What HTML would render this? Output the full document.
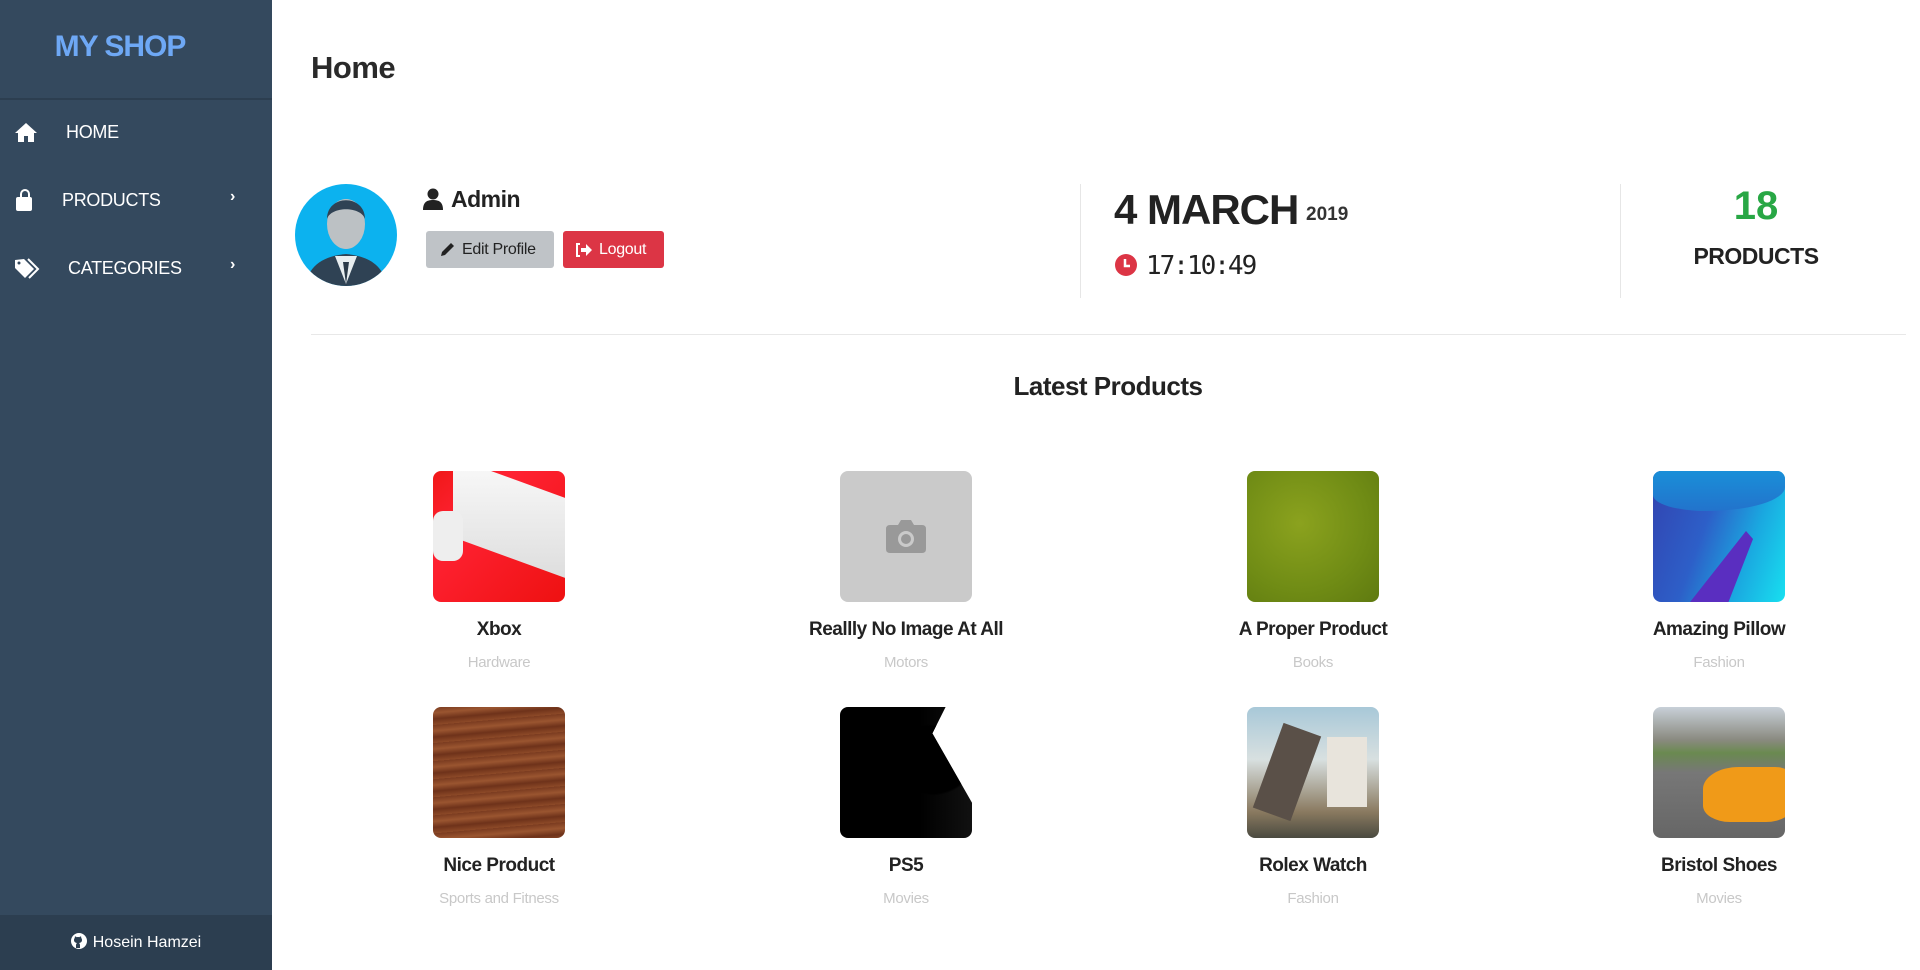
<!DOCTYPE html>
<html><head><meta charset="utf-8"><style>
*{margin:0;padding:0;box-sizing:border-box}
body{width:1920px;height:970px;overflow:hidden;font-family:"Liberation Sans",sans-serif;background:#fff;position:relative;color:#222}
.sb{position:absolute;left:0;top:0;width:272px;height:970px;background:#34495e}
.logo{position:absolute;top:30px;left:0;width:240px;text-align:center;color:#6ea8f5;font-weight:bold;font-size:30px;letter-spacing:-1px}
.sbline{position:absolute;top:98px;left:0;width:272px;height:2px;background:#2c3e50}
.nav{position:absolute;left:0;width:272px;color:#fff;font-size:18px;letter-spacing:-0.3px}
.nav svg{position:absolute;left:14px;top:-11px}
.nav .t{position:absolute;top:-10px}
.nav .ch{position:absolute;left:230px;top:-12px;font-size:16px;font-weight:bold}
.foot{position:absolute;left:0;bottom:0;width:272px;height:55px;background:#2c3e50;color:#fff;font-size:16px;text-align:center;line-height:55px}
.a{position:absolute}
.btn{position:absolute;height:37px;border-radius:3px;font-size:16px;line-height:37px;padding-left:36px;letter-spacing:-0.3px}
.img{position:absolute;width:132px;height:131px;border-radius:8px;overflow:hidden}
.nm{position:absolute;width:400px;text-align:center;font-size:19px;font-weight:bold;color:#222;letter-spacing:-0.5px}
.ct{position:absolute;width:400px;text-align:center;font-size:15px;color:#c8c8c8;letter-spacing:-0.3px}
</style></head><body>
<div class="sb">
<div class="logo">MY SHOP</div>
<div class="sbline"></div>
<div class="nav" style="top:132px"><svg width="24" height="22" viewBox="0 0 24 22"><path d="M12 2 L1 12 L4 12 L4 21 L10 21 L10 15 L14 15 L14 21 L20 21 L20 12 L23 12 Z" fill="#fff"/></svg><span class="t" style="left:66px">HOME</span></div>
<div class="nav" style="top:200px"><svg width="22" height="24" viewBox="0 0 22 24"><path d="M7 8 V5 a4 4 0 0 1 8 0 V8" stroke="#fff" stroke-width="2" fill="none"/><rect x="2" y="8" width="16" height="14" rx="2" fill="#fff"/></svg><span class="t" style="left:62px">PRODUCTS</span><span class="ch">›</span></div>
<div class="nav" style="top:268px"><svg width="28" height="24" viewBox="0 0 28 24"><path d="M1 3 L1 11 L11 21 L20 12 L10 2 Z" fill="#fff"/><path d="M14 2 L24 12 L15 21" stroke="#fff" stroke-width="2" fill="none"/><circle cx="5" cy="6" r="1.5" fill="#34495e"/></svg><span class="t" style="left:68px">CATEGORIES</span><span class="ch">›</span></div>
<div class="foot"><svg width="16" height="16" viewBox="0 0 16 16" style="vertical-align:-2px;margin-right:6px"><circle cx="8" cy="8" r="8" fill="#fff"/><path d="M5 15 v-3 c0-1 .5-1.5 1-2 c-2-.3-3-1.2-3-3 c0-1 .3-1.6 .8-2 c-.1-.6 0-1.2 .2-1.6 c.6 0 1.2 .4 1.8 .8 c.8-.2 1.6-.2 2.4 0 c.6-.4 1.2-.8 1.8-.8 c.2 .4 .3 1 .2 1.6 c.5 .4 .8 1 .8 2 c0 1.8-1 2.7-3 3 c.5 .5 1 1 1 2 v3 z" fill="#2c3e50"/></svg>Hosein Hamzei</div>
</div>

<div class="a" style="left:311px;top:50px;font-size:31px;color:#2a2a2a;font-weight:bold;letter-spacing:-0.5px">Home</div>

<svg class="a" style="left:295px;top:184px" width="102" height="102" viewBox="0 0 102 102"><defs><clipPath id="c"><circle cx="51" cy="51" r="51"/></clipPath></defs><g clip-path="url(#c)"><rect width="102" height="102" fill="#0cb2ef"/><path d="M10 102 C14 80 30 72 51 70 C72 72 88 80 92 102 Z" fill="#2f4254"/><path d="M40 72 L51 100 L62 72 Z" fill="#e8eef0"/><path d="M48 78 L51 100 L54 78 Z" fill="#2a3a48"/><ellipse cx="51" cy="40" rx="19" ry="25" fill="#bcc1c4"/><path d="M32 35 C32 10 70 10 70 35 C66 22 36 22 32 35Z" fill="#2f4254"/></g></svg>

<svg class="a" style="left:423px;top:188px" width="20" height="22" viewBox="0 0 20 22"><circle cx="10" cy="6" r="5.5" fill="#222"/><path d="M0 22 C0 14 4 12 10 12 C16 12 20 14 20 22Z" fill="#222"/></svg>
<div class="a" style="left:451px;top:186px;font-size:23px;font-weight:bold;color:#222;letter-spacing:-0.5px">Admin</div>
<div class="btn" style="left:426px;top:231px;width:128px;background:#bfc3c7;color:#222"><svg class="a" style="left:13px;top:11px" width="16" height="16" viewBox="0 0 16 16"><path d="M2 14 L3 10 L12 1 L15 4 L6 13 Z" fill="#222"/></svg>Edit Profile</div>
<div class="btn" style="left:563px;top:231px;width:101px;background:#dc3545;color:#fff"><svg class="a" style="left:12px;top:12px" width="18" height="14" viewBox="0 0 18 14"><path d="M5 1 H2 V13 H5" stroke="#fff" stroke-width="2" fill="none"/><path d="M6 5 H11 V1 L17 7 L11 13 V9 H6 Z" fill="#fff"/></svg>Logout</div>

<div class="a" style="left:1080px;top:184px;width:1px;height:114px;background:#e6e6e6"></div>
<div class="a" style="left:1114px;top:186px;font-size:42px;color:#222;font-weight:bold;letter-spacing:-1px">4&nbsp;MARCH</div>
<div class="a" style="left:1306px;top:204px;font-size:19px;color:#333;font-weight:bold">2019</div>
<svg class="a" style="left:1115px;top:254px" width="22" height="22" viewBox="0 0 22 22"><circle cx="11" cy="11" r="11" fill="#dc3545"/><path d="M10 5 V12 H15" stroke="#fff" stroke-width="2.5" fill="none"/></svg>
<div class="a" style="left:1146px;top:251px;font-size:26px;color:#222;font-family:'DejaVu Sans Mono',monospace;letter-spacing:-2px">17:10:49</div>

<div class="a" style="left:1620px;top:184px;width:1px;height:114px;background:#e6e6e6"></div>
<div class="a" style="left:1620px;top:184px;width:272px;text-align:center;font-size:40px;font-weight:bold;color:#28a745">18</div>
<div class="a" style="left:1620px;top:243px;width:272px;text-align:center;font-size:23px;font-weight:bold;color:#222;letter-spacing:-0.5px">PRODUCTS</div>

<div class="a" style="left:311px;top:334px;width:1595px;height:1px;background:#e8e8e8"></div>
<div class="a" style="left:908px;top:371px;width:400px;text-align:center;font-size:26px;font-weight:bold;color:#222;letter-spacing:-0.5px">Latest Products</div>

<div class="img" style="left:433px;top:471px;background:linear-gradient(135deg,#f01818 0%,#f23 30%,#e11 100%)"><div class="a" style="left:20px;top:8px;width:120px;height:80px;background:linear-gradient(160deg,#fafafa,#ddd);transform:skewY(20deg)"></div><div class="a" style="left:0px;top:40px;width:30px;height:50px;background:#eee;border-radius:10px"></div></div>
<div class="img" style="left:840px;top:471px;background:#cacaca"><svg class="a" style="left:46px;top:48px" width="40" height="34" viewBox="0 0 40 34"><path d="M4 6 H12 L15 1 H25 L28 6 H36 Q40 6 40 10 V30 Q40 34 36 34 H4 Q0 34 0 30 V10 Q0 6 4 6Z" fill="#999"/><circle cx="20" cy="20" r="8" fill="#cacaca"/><circle cx="20" cy="20" r="5" fill="#999"/></svg></div>
<div class="img" style="left:1247px;top:471px;background:radial-gradient(circle at 40% 40%,#8ba21e,#708c15 60%,#5f7a10)"></div>
<div class="img" style="left:1653px;top:471px;background:linear-gradient(110deg,#3243b0 0%,#2d5fc8 40%,#1aa8e0 70%,#18e0f0 100%)"><div class="a" style="left:0;top:0;width:132px;height:40px;background:linear-gradient(180deg,#1a8fd8,#2273cc);border-radius:0 0 60% 40%"></div><div class="a" style="left:30px;top:60px;width:70px;height:80px;background:#5a2ec0;clip-path:polygon(90% 0,100% 10%,60% 100%,0 100%)"></div></div>

<div class="img" style="left:433px;top:707px;background:repeating-linear-gradient(175deg,#7a3b20 0px,#9a5530 6px,#6e321a 12px,#8d4a28 18px)"></div>
<div class="img" style="left:840px;top:707px;background:#fff"><div class="a" style="left:0;top:0;width:132px;height:132px;background:radial-gradient(ellipse at 70% 40%,#000 30%,transparent 32%),linear-gradient(90deg,#000 60%,#111 100%);clip-path:polygon(0 0,80% 0,70% 20%,110% 90%,100% 100%,0 100%)"></div></div>
<div class="img" style="left:1247px;top:707px;background:linear-gradient(180deg,#a8c8d8 0%,#d8e0e0 40%,#8a7a60 80%,#4a4a40 100%)"><div class="a" style="left:20px;top:20px;width:40px;height:90px;background:#5a5048;transform:rotate(20deg)"></div><div class="a" style="left:80px;top:30px;width:40px;height:70px;background:#e8e4dc"></div></div>
<div class="img" style="left:1653px;top:707px;background:linear-gradient(180deg,#c8d0d8 0%,#8a8a80 25%,#6a8a50 35%,#777 50%,#666 100%)"><div class="a" style="left:50px;top:60px;width:90px;height:55px;background:#f09a18;border-radius:40% 20% 30% 30%"></div></div>

<div class="nm" style="left:299px;top:619px">Xbox</div><div class="ct" style="left:299px;top:654px">Hardware</div>
<div class="nm" style="left:706px;top:619px">Reallly No Image At All</div><div class="ct" style="left:706px;top:654px">Motors</div>
<div class="nm" style="left:1113px;top:619px">A Proper Product</div><div class="ct" style="left:1113px;top:654px">Books</div>
<div class="nm" style="left:1519px;top:619px">Amazing Pillow</div><div class="ct" style="left:1519px;top:654px">Fashion</div>
<div class="nm" style="left:299px;top:855px">Nice Product</div><div class="ct" style="left:299px;top:890px">Sports and Fitness</div>
<div class="nm" style="left:706px;top:855px">PS5</div><div class="ct" style="left:706px;top:890px">Movies</div>
<div class="nm" style="left:1113px;top:855px">Rolex Watch</div><div class="ct" style="left:1113px;top:890px">Fashion</div>
<div class="nm" style="left:1519px;top:855px">Bristol Shoes</div><div class="ct" style="left:1519px;top:890px">Movies</div>
</body></html>
